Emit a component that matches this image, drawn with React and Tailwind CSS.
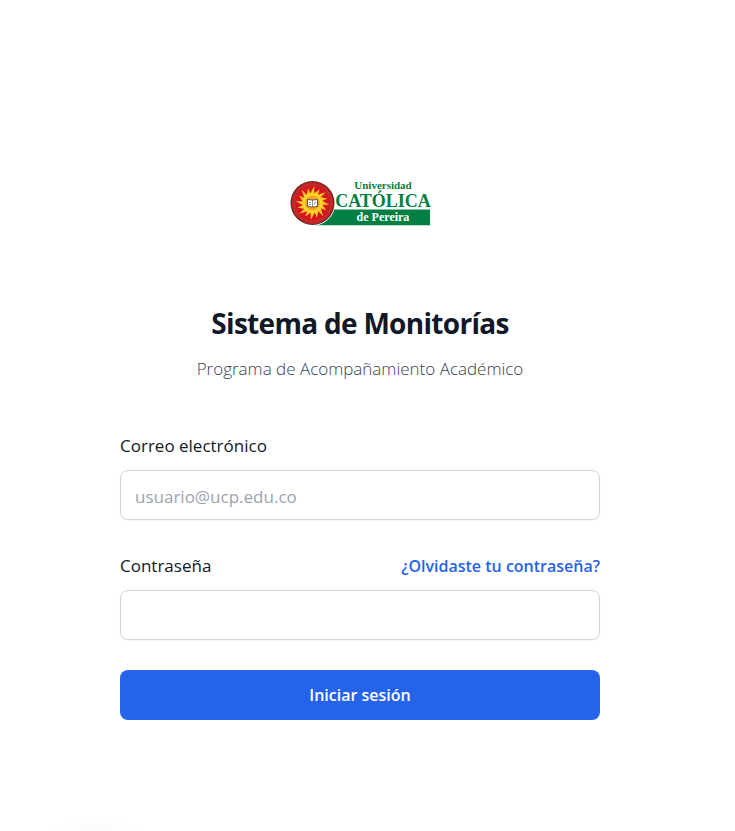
const rays = Array.from({ length: 16 }, (_, i) => {
  const tip = (i * Math.PI) / 8;
  const outer = i % 2 ? 15.5 : 17;
  const point = (r, a) => `${(22.5 + r * Math.cos(a)).toFixed(2)},${(23 + r * Math.sin(a)).toFixed(2)}`;
  return `${point(10.5, tip - Math.PI / 18)} ${point(outer, tip + Math.PI / 30)} ${point(9.8, tip + Math.PI / 18)}`;
}).join(" ");

function Logo() {
  return (
    <svg viewBox="0 0 140 46" role="img" aria-label="Universidad Católica de Pereira" className="h-[46px] w-[140px] overflow-visible">
      <path d="M22 45.200 C32 45 40 40 43 29.500 H140 V45.200 Z" fill="#047f43" />
      <circle cx="22.500" cy="23" r="22.800" fill="#fff" />
      <circle cx="22.500" cy="23" r="22" fill="#4e3320" />
      <circle cx="22.500" cy="23" r="21" fill="#cf1820" />
      <circle cx="22.500" cy="23" r="18.700" fill="none" stroke="#a8433a" strokeWidth="2.200" strokeDasharray="1.300 1" />
      <circle cx="22.500" cy="23" r="16.800" fill="#d8131d" />
      <polygon points={rays} fill="#fbc926" />
      <circle cx="22.500" cy="23" r="10" fill="#fdd42c" />
      <circle cx="22.500" cy="23" r="7.500" fill="#f3a71f" />
      <path d="M17.500 19.500 L22.500 20 L27.500 19.500 V26.500 L22.500 27 L17.500 26.500 Z" fill="#fff" stroke="#3c352b" strokeWidth=".8" />
      <path d="M22.500 20 V27 M19 22.500 H21 M19 24.500 H21 M24 24.500 L26 21.500" stroke="#52504a" strokeWidth=".6" />
      <g fontFamily="'Liberation Serif', serif" fontWeight="700" textAnchor="middle">
        <text x="93" y="9" fontSize="11" fill="#047f43">Universidad</text>
        <text x="93" y="27" fontSize="18" fill="#047f43">CATÓLICA</text>
        <text x="93" y="41" fontSize="12" fill="#fff">de Pereira</text>
      </g>
    </svg>
  );
}

const inputStyle =
  "h-[50px] w-full rounded-lg border border-gray-300 bg-white px-3.5 pt-0.5 text-[17px] text-[#111827] shadow-xs outline-none placeholder:text-[#9ca3af] focus:border-blue-600";

export default function App() {
  return (
    <main className="min-h-screen bg-white pt-[180px] pr-[15px] pb-[111px] font-['Open_Sans','Noto_Sans',sans-serif] text-[#111827]">
      <div className="mx-auto w-full max-w-[480px]">
        <header className="flex flex-col items-center text-center">
          <Logo />
          <h1 className="mt-[77px] text-[28px] leading-10 font-bold tracking-tight">Sistema de Monitorías</h1>
          <p className="mt-3 text-[17px] leading-7 font-light text-[#374151]">Programa de Acompañamiento Académico</p>
        </header>
        <form className="mt-[49px]" onSubmit={(event) => event.preventDefault()}>
          <label htmlFor="email" className="mb-2.5 block text-[17px] leading-7 font-medium">
            Correo electrónico
          </label>
          <input id="email" type="email" placeholder="usuario@ucp.edu.co" className={inputStyle} />
          <div className="mt-8 mb-2.5 flex items-center justify-between leading-7">
            <label htmlFor="password" className="text-[17px] font-medium">
              Contraseña
            </label>
            <a href="#recuperar" className="text-[16px] font-semibold text-[#2563eb]">
              ¿Olvidaste tu contraseña?
            </a>
          </div>
          <input id="password" type="password" className={inputStyle} />
          <button type="submit" className="mt-[30px] h-[50px] w-full rounded-lg bg-[#2563eb] text-[16px] font-semibold text-white">
            Iniciar sesión
          </button>
        </form>
      </div>
      <div aria-hidden="true" className="fixed top-full left-14 h-10 w-20 rounded-full shadow-[0_0_24px_rgba(0,0,0,0.03)]" />
    </main>
  );
}
